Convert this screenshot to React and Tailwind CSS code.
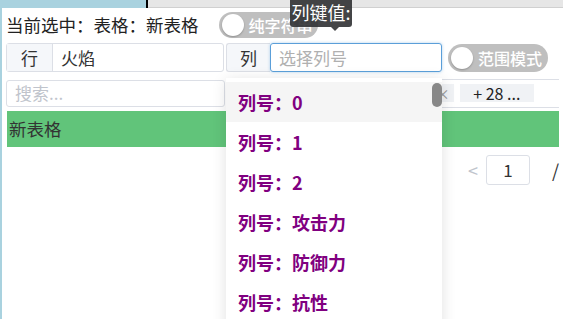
import React from 'react';

const items = ["0", "1", "2", "攻击力", "防御力", "抗性"];

function Toggle({ label, className }) {
    return (
        <div className={"flex items-center rounded-full bg-[#bfbfbf] p-[3px] pr-2 whitespace-nowrap " + className}>
            <div className="shrink-0 w-[22px] h-[22px] rounded-full bg-white shadow-[0_1px_2px_rgba(0,0,0,0.25)]"></div>
            <span className="ml-[5px] text-[16px] font-medium text-white leading-none">{label}</span>
        </div>
    );
}

export default function App() {
    return (
        <div className="relative w-[563px] h-[319px] overflow-hidden bg-[#a9d2df] font-['Microsoft_YaHei','Noto_Sans_CJK_SC',sans-serif] text-[#333]">
            {/* background window strip */}
            <div className="flex h-[8px]">
                <div className="w-[146px] bg-[#a9d2df]"></div>
                <div className="w-[2px] bg-black"></div>
                <div className="flex-1 bg-[#e6e6e6] border-b border-[#d0d0d0]"></div>
            </div>

            <div className="absolute left-[2px] top-[8px] right-0 bottom-0 bg-white px-[4px]">
                {/* row 1 */}
                <div className="flex items-center h-[32px] mt-[1px]">
                    <span className="text-[17.5px] text-[#222]">当前选中：表格：新表格</span>
                    <Toggle label="纯字符串" className="ml-[20px] w-[99px] h-[26px]" />
                </div>

                {/* row 2 */}
                <div className="flex items-center h-[29px] mt-[2px]">
                    <div className="flex w-[218px] h-full border border-[#dcdfe6] rounded-[3px]">
                        <div className="w-[46px] flex items-center justify-center bg-[#f5f7fa] border-r border-[#dcdfe6] text-[17px]">行</div>
                        <div className="flex-1 flex items-center px-[8px] text-[17px]">火焰</div>
                    </div>
                    <div className="flex w-[216px] h-full ml-[2px]">
                        <div className="w-[44px] flex items-center justify-center bg-[#f5f7fa] border border-r-0 border-[#dcdfe6] rounded-l-[3px] text-[17px]">列</div>
                        <div className="flex-1 flex items-center px-[8px] text-[17px] text-[#b0b0b0] border border-[#5b9fd9] rounded-[3px] shadow-[0_0_3px_rgba(91,159,217,0.5)]">选择列号</div>
                    </div>
                    <Toggle label="范围模式" className="ml-[6px] w-[100px] h-[28px]" />
                </div>

                {/* row 3 */}
                <div className="flex items-center h-[28px] mt-[7px]">
                    <div className="w-[219px] h-[27px] border border-[#dcdfe6] rounded-[3px] flex items-center px-[8px] text-[17px] text-[#c0c4cc]">搜索...</div>
                    <div className="flex-1 h-[29px] ml-[3px] border-y border-[#dcdfe6] flex items-center whitespace-nowrap">
                        <div className="ml-[142px] flex items-center h-[18px] bg-[#f0f2f5] pl-2 pr-[4px] text-[14px] text-[#999]">列号：0 <span className="ml-2">×</span></div>
                        <div className="ml-[6px] flex items-center justify-center w-[74px] h-[18px] bg-[#f0f2f5] text-[16px] text-[#222]">+ 28 ...</div>
                    </div>
                </div>

                {/* table row */}
                <div className="mt-[4px] ml-[1px] h-[36px] bg-[#61c47a] flex items-center px-[2px] text-[17.5px] text-[#333]">新表格</div>

                {/* pagination */}
                <div className="flex items-center mt-[8px] h-[30px] pl-[462px]">
                    <span className="text-[18px] text-[#c0c4cc]">&lt;</span>
                    <div className="ml-[8px] w-[50px] h-[30px] border border-[#dcdfe6] rounded-[3px] flex items-center justify-center text-[17px] text-[#333]">1</div>
                    <span className="ml-[22px] text-[18px] text-[#333]">/</span>
                </div>
            </div>

            {/* dropdown */}
            <div className="absolute left-[226px] top-[78px] w-[216px] h-[260px] bg-white shadow-[0_2px_14px_rgba(0,0,0,0.12)] pt-[4px]">
                {items.map((it, i) => (
                    <div key={i} className={"h-[40px] flex items-center pl-[12px] text-[18px] font-bold text-[#800080] " + (i === 0 ? "bg-[#f5f5f5]" : "")}>
                        列号：{it}
                    </div>
                ))}
                <div className="absolute right-0 top-[5px] w-[10px] h-[24px] rounded-[5px] bg-[#888]"></div>
            </div>

            {/* tooltip */}
            <div className="absolute left-[290px] top-[-8px] w-[62px] h-[35px] bg-[#303133]/90 rounded-[3px] flex items-end justify-center pb-[6px] text-white text-[18px] leading-none">
                列键值:
                <div className="absolute left-[41px] bottom-[-4px] w-0 h-0 border-x-[4px] border-x-transparent border-t-[4px] border-t-[#303133]/90"></div>
            </div>
        </div>
    );
}
